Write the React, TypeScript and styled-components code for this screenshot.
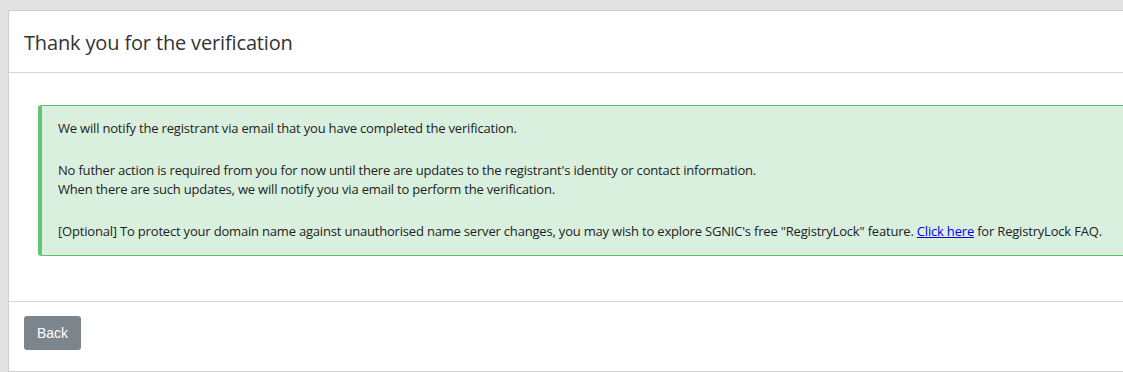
import React from 'react'
import styled, { createGlobalStyle } from 'styled-components'

const GlobalStyle = createGlobalStyle`
  html, body {
    margin: 0;
    padding: 0;
    background: #e2e2e2;
    overflow: hidden;
  }
  body {
    padding: 10px 0 0 8px;
    font-family: "Open Sans", "Liberation Sans", sans-serif;
  }
`

const Card = styled.div`
  width: 1170px;
  background: #fff;
  border: 1px solid #cfcfcf;
  box-sizing: border-box;
`
const CardHeader = styled.div`
  height: 62px;
  padding: 0 15px;
  display: flex;
  align-items: center;
  border-bottom: 1px solid #d4d4d4;
  box-sizing: border-box;
`
const Title = styled.h3`
  margin: 0;
  padding-top: 1px;
  font-size: 20px;
  font-weight: 400;
  letter-spacing: -0.15px;
  color: #333;
`
const CardBody = styled.div`
  padding: 32px 30px 45px 29px;
`
const Alert = styled.div`
  background: #daf0df;
  border: 1px solid #5cbf6c;
  border-left: 4px solid #62c474;
  border-radius: 3px;
  padding: 13px 20px 14px 16px;
  color: #222;
  font-size: 13px;
  line-height: 19px;
  letter-spacing: -0.19px;
`
const Para = styled.p`
  margin: 0 0 23px;
  white-space: nowrap;
  &:last-child {
    margin-bottom: 0;
  }
`
const Link = styled.a`
  color: #0000ee;
  text-decoration: underline;
`
const CardFooter = styled.div`
  border-top: 1px solid #d4d4d4;
  padding: 14px 15px 21px;
`
const Button = styled.button`
  font-family: "Liberation Sans", Arial, sans-serif;
  font-size: 14px;
  line-height: 20px;
  padding: 7px 13px;
  color: #fff;
  background: #7d858c;
  border: none;
  border-radius: 3px;
`

export default function App() {
  return (
    <>
      <GlobalStyle />
      <Card>
        <CardHeader>
          <Title>Thank you for the verification</Title>
        </CardHeader>
        <CardBody>
          <Alert>
            <Para>We will notify the registrant via email that you have completed the verification.</Para>
            <Para>
              No futher action is required from you for now until there are updates to the registrant's identity or contact information.
              <br />
              When there are such updates, we will notify you via email to perform the verification.
            </Para>
            <Para>
              [Optional] To protect your domain name against unauthorised name server changes, you may wish to explore SGNIC's free "RegistryLock" feature.{' '}
              <Link href="#">Click here</Link> for RegistryLock FAQ.
            </Para>
          </Alert>
        </CardBody>
        <CardFooter>
          <Button>Back</Button>
        </CardFooter>
      </Card>
    </>
  )
}
